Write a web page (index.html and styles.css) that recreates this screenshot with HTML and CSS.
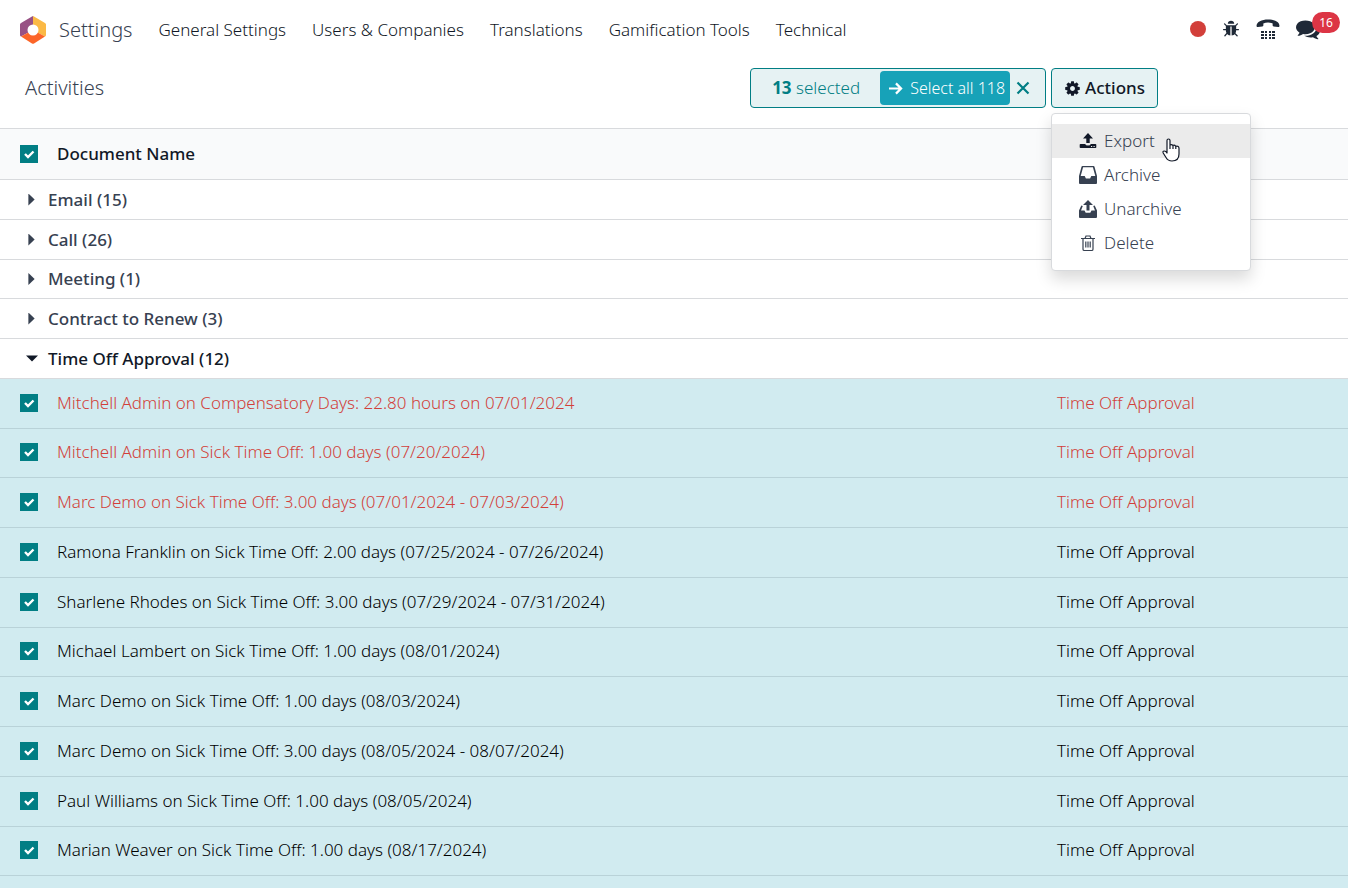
FILE: index.html
```html
<!DOCTYPE html>
<html lang="en">
<head>
    <meta charset="UTF-8">
    <meta name="viewport" content="width=device-width, initial-scale=1.0">
    <title>Activities - Settings</title>
    <link rel="stylesheet" href="styles.css">
</head>
<body>
    <header class="navbar">
        <a class="brand" href="#">
            <svg class="logo" viewBox="0 0 26 28" aria-hidden="true">
                <path fill="#985184" d="M13 0v14L1 20.500Q0 20 0 19V8.500Q0 7.500 1 7L12 .5Q12.500 0 13 0z"/>
                <path fill="#fbb945" d="M13 0v14l12 6.500Q26 20 26 19V8.500Q26 7.500 25 7L14 .5Q13.500 0 13 0z"/>
                <path fill="#fc6528" d="M13 14L1 20.500l11 7Q13 28 14 27.500l11-7z"/>
                <circle cx="13" cy="14" r="5.500" fill="#fff"/>
            </svg>
            <span>Settings</span>
        </a>
        <nav class="menu">
            <a href="#">General Settings</a>
            <a href="#">Users &amp; Companies</a>
            <a href="#">Translations</a>
            <a href="#">Gamification Tools</a>
            <a href="#">Technical</a>
        </nav>
        <div class="systray">
            <button class="record" type="button" aria-label="Record"></button>
            <button class="tray-btn" type="button" aria-label="Debug">
                <svg class="icon-bug" viewBox="0 0 1792 1792"><path d="M1696 960q0 26-19 45t-45 19h-224q0 171-67 290l208 209q19 19 19 45t-19 45q-18 19-45 19t-45-19l-198-197q-5 5-15 13t-42 28.500-65 36.500-82 29-97 13v-896h-128v896q-51 0-101.500-13.500t-87-33-66-39-43.500-32.500l-15-14-183 207q-20 21-48 21-24 0-43-16-19-18-20.500-44.500t15.500-46.500l202-227q-58-114-58-274h-224q-26 0-45-19t-19-45 19-45 45-19h224v-294l-173-173q-19-19-19-45t19-45 45-19 45 19l173 173h844l173-173q19-19 45-19t45 19 19 45-19 45l-173 173v294h224q26 0 45 19t19 45zm-480-576h-640q0-133 93.500-226.500t226.500-93.500 226.500 93.500 93.500 226.500z"/></svg>
            </button>
            <button class="tray-btn" type="button" aria-label="Phone">
                <svg class="icon-phone" viewBox="0 0 24 20">
                    <path d="M.6 7.200C0 3.200 5.500.4 12 .4s12 2.800 11.400 6.800q-.2 1-1.200.9l-4.600-.7q-1-.2-1-1.200l.1-1.700Q14.500 3.600 12 3.600t-4.700.9l.1 1.700q0 1-1 1.200l-4.600.7q-1 .1-1.200-.9z"/>
                    <path d="M5 12h3v2H5zM9 12h2v2H9zM13 12h2v2h-2zM16 12h3v2h-3zM5 15h3v2H5zM9 15h2v2H9zM13 15h2v2h-2zM16 15h3v2h-3zM5 18h3v2H5zM9 18h2v2H9zM13 18h2v2h-2zM16 18h3v2h-3z"/>
                </svg>
            </button>
            <button class="tray-btn messages" type="button" aria-label="Messages">
                <svg class="icon-chat" viewBox="0 0 1792 1792"><path d="M1408 768q0 139-94 257t-256.500 186.500-353.500 68.500q-86 0-176-16-124 88-278 128-36 9-86 16h-3q-11 0-20.500-8t-11.500-21q-1-3-1-6.500t.5-6.500 2-6l2.500-5 3.500-5.500 4-5 4.500-5 4-4.500q5-6 23-25t26-29.500 22.500-29 25-38.500 20.500-44q-124-72-195-177t-71-224q0-139 94-257t256.500-186.500 353.500-68.500 353.500 68.500 256.500 186.500 94 257zm384 256q0 120-71 224.500t-195 176.500q10 24 20.500 44t25 38.500 22.500 29 26 29.500 23 25q1 1 4 4.500t4.500 5 4 5 3.500 5.500l2.500 5 2 6 .5 6.500-1 6.500q-3 14-13 22t-22 7q-50-7-86-16-154-40-278-128-90 16-176 16-271 0-472-132 58 4 88 4 161 0 309-45t264-129q125-92 192-212t67-254q0-77-23-152 129 71 204 178t75 230z"/></svg>
                <span class="badge">16</span>
            </button>
        </div>
    </header>

    <div class="control-panel">
        <h1>Activities</h1>
        <div class="selection">
            <div class="selection-box">
                <span class="selected"><b>13</b> selected</span>
                <button class="select-all" type="button">
                    <svg viewBox="0 0 16 14" aria-hidden="true"><path d="M1 7h13M8.500 1.500L14 7l-5.500 5.500" fill="none" stroke="currentColor" stroke-width="2.400"/></svg>
                    Select all 118
                </button>
                <button class="unselect" type="button" aria-label="Unselect all">
                    <svg viewBox="0 0 14 14"><path d="M1.500 1.500l11 11M12.500 1.500l-11 11" fill="none" stroke="currentColor" stroke-width="2.200"/></svg>
                </button>
            </div>
            <div class="dropdown">
                <button class="actions" type="button">
                    <svg viewBox="0 0 1792 1792" aria-hidden="true"><path d="M1152 896q0-106-75-181t-181-75-181 75-75 181 75 181 181 75 181-75 75-181zm512-109v222q0 12-8 23t-20 13l-185 28q-19 54-39 91 35 50 107 138 10 12 10 25t-9 23q-27 37-99 108t-94 71q-12 0-26-9l-138-108q-44 23-91 38-16 136-29 186-7 28-36 28h-222q-14 0-24.500-8.500t-11.500-21.500l-28-184q-49-16-90-37l-141 107q-10 9-25 9-14 0-25-11-126-114-165-168-7-10-7-23 0-12 8-23 15-21 51-66.500t54-70.500q-27-50-41-99l-183-27q-13-2-21-12.500t-8-23.500v-222q0-12 8-23t19-13l186-28q14-46 39-92-40-57-107-138-10-12-10-24 0-10 9-23 26-36 98.500-107.500t94.500-71.500q13 0 26 10l138 107q44-23 91-38 16-136 29-186 7-28 36-28h222q14 0 24.500 8.500t11.500 21.500l28 184q49 16 90 37l142-107q9-9 24-9 13 0 25 10 129 119 165 170 7 8 7 22 0 12-8 23-15 21-51 66.500t-54 70.500q26 50 41 98l183 28q13 2 21 12.500t8 23.500z"/></svg>
                    Actions
                </button>
                <div class="dropdown-menu">
                    <button class="item active" type="button">
                        <svg viewBox="0 0 18 18" aria-hidden="true"><path d="M9 1l5 5.500h-3.300V11H7.300V6.500H4zM1.500 12h4.700q.4 1.500 2.800 1.500t2.800-1.500h4.700q.8 0 .8.800v2.400q0 .8-.8.800h-15q-.8 0-.8-.8v-2.400q0-.8.8-.8zM12 14v1h1.200v-1zm2.500 0v1h1.200v-1z"/></svg>
                        Export
                        <svg class="pointer" viewBox="0 0 18 24" aria-hidden="true"><path d="M5 14V2.500Q5 1 6.500 1T8 2.500V7q1.500-1 3 .5 1.500-.8 2.800.8Q17 7.500 17 10.500V16q0 7-7 7-4 0-6-3.500L1.200 15q-.8-2 1-2Q4 13 5 15zM8 7v4M11 7.500V11M13.800 8.300V11" fill="#fff" stroke="#111827" stroke-width="1.200" stroke-linejoin="round"/></svg>
                    </button>
                    <button class="item" type="button">
                        <svg viewBox="0 0 18 18" aria-hidden="true"><path fill-rule="evenodd" d="M3.500 0h11q.8 0 1 .8L18 10v7q0 1-1 1H1q-1 0-1-1v-7L2.500.8q.2-.8 1-.8zm.6 1.300L1.700 10h4l1.200 2.500h4.200l1.200-2.500h4l-2.400-8.700z"/></svg>
                        Archive
                    </button>
                    <button class="item" type="button">
                        <svg viewBox="0 0 18 18" aria-hidden="true"><path d="M9 0l5 5h-3.500v5.500h-3V5H4zM0 10.500l2.300-5 1.500.5L2 10.500h3.500l1.200 2.200h4.600l1.200-2.200H16L14.200 6l1.500-.5 2.300 5V17q0 1-1 1H1q-1 0-1-1z"/></svg>
                        Unarchive
                    </button>
                    <button class="item" type="button">
                        <svg viewBox="0 0 18 18" aria-hidden="true"><path d="M2 4.500h14M4 4.500v10.700q0 1.300 1.300 1.300h7.400q1.300 0 1.300-1.300V4.500M6 4.500L7 2h4l1 2.500M6.800 7.500v6M9 7.500v6M11.200 7.500v6" fill="none" stroke="currentColor" stroke-width="1.200"/></svg>
                        Delete
                    </button>
                </div>
            </div>
        </div>
    </div>

    <main class="list">
        <table>
            <colgroup>
                <col class="col-check">
                <col>
                <col class="col-type">
            </colgroup>
            <thead>
                <tr>
                    <th><input type="checkbox" aria-label="Select all records" checked></th>
                    <th>Document Name</th>
                    <th></th>
                </tr>
            </thead>
            <tbody class="groups">
                <tr><th colspan="3"><button type="button"><span class="caret"></span>Email (15)</button></th></tr>
                <tr><th colspan="3"><button type="button"><span class="caret"></span>Call (26)</button></th></tr>
                <tr><th colspan="3"><button type="button"><span class="caret"></span>Meeting (1)</button></th></tr>
                <tr><th colspan="3"><button type="button"><span class="caret"></span>Contract to Renew (3)</button></th></tr>
                <tr class="open"><th colspan="3"><button type="button"><span class="caret"></span>Time Off Approval (12)</button></th></tr>
            </tbody>
            <tbody class="records">
                <tr class="late">
                    <td><input type="checkbox" aria-label="Select record" checked></td>
                    <td>Mitchell Admin on Compensatory Days: 22.80 hours on 07/01/2024</td>
                    <td>Time Off Approval</td>
                </tr>
                <tr class="late">
                    <td><input type="checkbox" aria-label="Select record" checked></td>
                    <td>Mitchell Admin on Sick Time Off: 1.00 days (07/20/2024)</td>
                    <td>Time Off Approval</td>
                </tr>
                <tr class="late">
                    <td><input type="checkbox" aria-label="Select record" checked></td>
                    <td>Marc Demo on Sick Time Off: 3.00 days (07/01/2024 - 07/03/2024)</td>
                    <td>Time Off Approval</td>
                </tr>
                <tr>
                    <td><input type="checkbox" aria-label="Select record" checked></td>
                    <td>Ramona Franklin on Sick Time Off: 2.00 days (07/25/2024 - 07/26/2024)</td>
                    <td>Time Off Approval</td>
                </tr>
                <tr>
                    <td><input type="checkbox" aria-label="Select record" checked></td>
                    <td>Sharlene Rhodes on Sick Time Off: 3.00 days (07/29/2024 - 07/31/2024)</td>
                    <td>Time Off Approval</td>
                </tr>
                <tr>
                    <td><input type="checkbox" aria-label="Select record" checked></td>
                    <td>Michael Lambert on Sick Time Off: 1.00 days (08/01/2024)</td>
                    <td>Time Off Approval</td>
                </tr>
                <tr>
                    <td><input type="checkbox" aria-label="Select record" checked></td>
                    <td>Marc Demo on Sick Time Off: 1.00 days (08/03/2024)</td>
                    <td>Time Off Approval</td>
                </tr>
                <tr>
                    <td><input type="checkbox" aria-label="Select record" checked></td>
                    <td>Marc Demo on Sick Time Off: 3.00 days (08/05/2024 - 08/07/2024)</td>
                    <td>Time Off Approval</td>
                </tr>
                <tr>
                    <td><input type="checkbox" aria-label="Select record" checked></td>
                    <td>Paul Williams on Sick Time Off: 1.00 days (08/05/2024)</td>
                    <td>Time Off Approval</td>
                </tr>
                <tr>
                    <td><input type="checkbox" aria-label="Select record" checked></td>
                    <td>Marian Weaver on Sick Time Off: 1.00 days (08/17/2024)</td>
                    <td>Time Off Approval</td>
                </tr>
            </tbody>
        </table>
    </main>
</body>
</html>
```
FILE: styles.css
```css
* {
    box-sizing: border-box;
}
body {
    margin: 0;
    min-height: 100vh;
    display: flex;
    flex-direction: column;
    background: #fff;
    color: #111827;
    font-family: "Noto Sans", "Open Sans", sans-serif;
    font-size: 17px;
    font-weight: 300;
    line-height: 24px;
}
button {
    font: inherit;
    color: inherit;
    background: none;
    border: none;
    padding: 0;
    cursor: pointer;
}
a {
    color: inherit;
    text-decoration: none;
}
svg {
    display: block;
    fill: currentColor;
}

/* Top bar */
.navbar {
    display: flex;
    align-items: center;
    height: 60px;
    padding: 0 20px;
}
.brand {
    display: flex;
    align-items: center;
    gap: 13px;
    margin-right: 26px;
    color: #374151;
    font-size: 20px;
}
.logo {
    width: 26px;
    height: 28px;
}
.menu {
    display: flex;
    gap: 26px;
}
.systray {
    display: flex;
    align-items: center;
    gap: 16px;
    margin-left: auto;
    padding-bottom: 3px;
}
.record {
    width: 16px;
    height: 16px;
    border-radius: 50%;
    background: #d23f3a;
}
.tray-btn {
    position: relative;
    color: #1f2937;
}
.icon-bug {
    width: 18px;
    height: 18px;
}
.icon-phone {
    width: 24px;
    height: 20px;
}
.icon-chat {
    width: 24px;
    height: 24px;
}
.messages {
    margin-right: 8px;
}
.badge {
    position: absolute;
    left: 16px;
    top: -5px;
    width: 28px;
    border-radius: 11px;
    background: #dc3545;
    color: #fff;
    font-size: 12px;
    font-weight: 400;
    line-height: 21px;
}

/* Control panel */
.control-panel {
    display: flex;
    align-items: center;
    justify-content: space-between;
    height: 68px;
    padding: 0 190px 12px 25px;
}
h1 {
    margin: 0;
    color: #374151;
    font-size: 20px;
    font-weight: 300;
}
.selection {
    display: flex;
    gap: 5px;
}
.selection-box,
.actions {
    display: flex;
    align-items: center;
    height: 40px;
    border: 1px solid #017e84;
    border-radius: 4px;
    background: #e6f2f3;
}
.selection-box {
    padding: 0 15px 0 21px;
    color: #017e84;
}
.selected b {
    font-weight: 700;
}
.select-all {
    display: flex;
    align-items: center;
    gap: 7px;
    height: 34px;
    margin: 0 6px 0 20px;
    padding: 0 5px 0 8px;
    border-radius: 4px;
    background: #17a2b8;
    color: #fff;
    font-size: 16px;
}
.select-all svg {
    width: 15px;
    height: 13px;
}
.unselect svg {
    width: 14px;
    height: 14px;
}
.dropdown {
    position: relative;
}
.actions {
    gap: 4px;
    padding: 0 12px;
    font-weight: 500;
}
.actions svg {
    width: 17px;
    height: 17px;
}
.dropdown-menu {
    position: absolute;
    z-index: 1;
    top: 45px;
    left: 0;
    width: 200px;
    padding: 10px 0;
    border: 1px solid #d8dadd;
    border-radius: 4px;
    background: #fff;
    box-shadow: 0 8px 16px rgba(0, 0, 0, 0.15);
}
.item {
    display: flex;
    align-items: center;
    gap: 7px;
    width: 100%;
    height: 34px;
    padding: 0 27px;
    color: #374151;
}
.item svg {
    width: 18px;
    height: 18px;
}
.item.active {
    background: #ebebeb;
}
.item.active > svg:first-child {
    color: #111827;
}
.item .pointer {
    position: absolute;
    left: 110px;
    top: 24px;
    width: 18px;
    height: 24px;
}

/* List */
.list {
    flex: 1;
    background: #d1ebf0;
}
table {
    width: 100%;
    table-layout: fixed;
    border-collapse: separate;
    border-spacing: 0;
}
.col-check {
    width: 57px;
}
.col-type {
    width: 291px;
}
th,
td {
    padding: 0;
    border-bottom: 1px solid #d8dadd;
    text-align: left;
}
thead th {
    height: 52px;
    border-top: 1px solid #d8dadd;
    background: #f9fafb;
    font-weight: 500;
}
input[type="checkbox"] {
    appearance: none;
    display: block;
    width: 18px;
    height: 18px;
    margin: 0 0 0 20px;
    background: #017e84 url("data:image/svg+xml,%3Csvg xmlns='http://www.w3.org/2000/svg' viewBox='0 0 18 18'%3E%3Cpath d='M5 9l3 3 5.500-5.500' fill='none' stroke='%23fff' stroke-width='2.400'/%3E%3C/svg%3E");
}
.groups th {
    height: 40px;
    background: #fff;
    color: #374151;
    font-weight: 500;
}
.groups tr:nth-child(3) th {
    height: 39px;
}
.groups button {
    display: flex;
    align-items: center;
    gap: 10px;
    padding-left: 26px;
}
.groups .open th {
    color: #111827;
}
.caret {
    width: 12px;
    height: 12px;
    background: currentColor;
    clip-path: polygon(20% 0, 72% 50%, 20% 100%);
}
.open .caret {
    clip-path: polygon(0 25%, 100% 25%, 50% 75%);
}
.records td {
    height: 50px;
    padding-bottom: 2px;
    border-color: #b9d2d8;
    color: #000;
}
.records tr:nth-child(4n+2) td {
    height: 49px;
}
.records .late td {
    color: #d23f3a;
}
```
